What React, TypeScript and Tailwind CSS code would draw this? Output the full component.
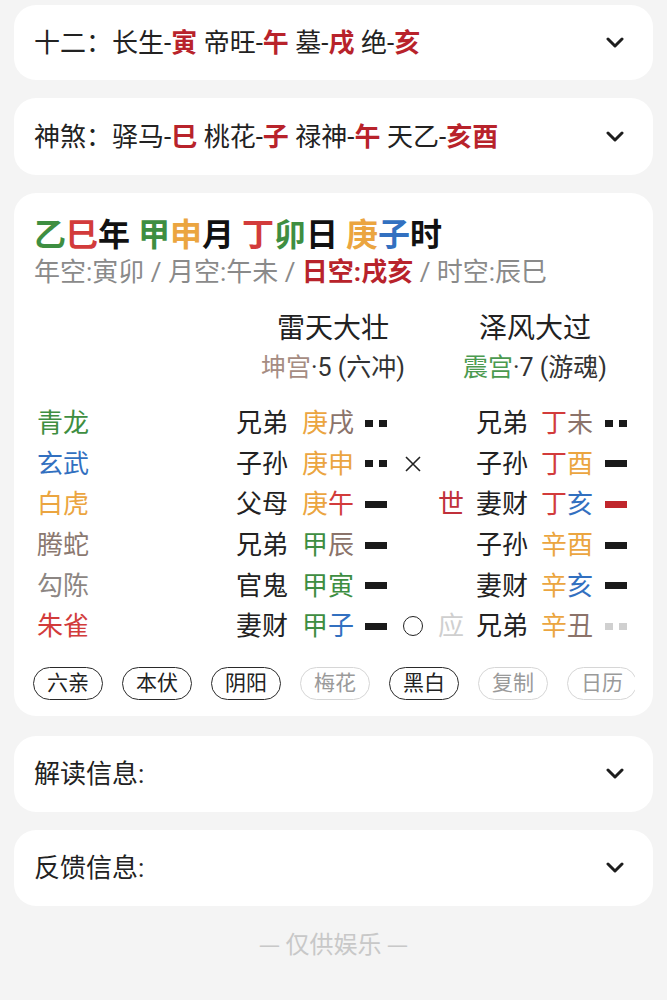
import React from "react";

const G = "text-[#3e8e41]";
const R = "text-[#d23b3b]";
const O = "text-[#eba540]";
const B = "text-[#3270c0]";
const N = "text-[#8b736a]";
const DR = "text-[#b8232b]";

function Chevron() {
  return (
    <svg width="18" height="11" viewBox="0 0 18 11" className="shrink-0">
      <polyline points="2,2 9,9 16,2" fill="none" stroke="#1e1e1e" strokeWidth="3" strokeLinecap="round" strokeLinejoin="round" />
    </svg>
  );
}

function Yang({ color = "bg-[#1a1a1a]" }: { color?: string }) {
  return <div className={`w-[22px] h-[7px] ${color}`} />;
}
function Yin({ color = "bg-[#1a1a1a]" }: { color?: string }) {
  return (
    <div className="flex gap-[6px] w-[22px]">
      <div className={`w-[8px] h-[7px] ${color}`} />
      <div className={`w-[8px] h-[7px] ${color}`} />
    </div>
  );
}

type Row = {
  shen: string;
  shenC: string;
  q1: string;
  g1: [string, string, string, string];
  l1: "yin" | "yang";
  mark?: "x" | "o";
  sy?: "世" | "应";
  q2: string;
  g2: [string, string, string, string];
  l2: "yin" | "yang";
  l2c?: string;
};

const rows: Row[] = [
  { shen: "青龙", shenC: G, q1: "兄弟", g1: ["庚", O, "戌", N], l1: "yin", q2: "兄弟", g2: ["丁", R, "未", N], l2: "yin" },
  { shen: "玄武", shenC: B, q1: "子孙", g1: ["庚", O, "申", O], l1: "yin", mark: "x", q2: "子孙", g2: ["丁", R, "酉", O], l2: "yang" },
  { shen: "白虎", shenC: O, q1: "父母", g1: ["庚", O, "午", R], l1: "yang", sy: "世", q2: "妻财", g2: ["丁", R, "亥", B], l2: "yang", l2c: "bg-[#c0262c]" },
  { shen: "腾蛇", shenC: "text-[#8a7870]", q1: "兄弟", g1: ["甲", G, "辰", N], l1: "yang", q2: "子孙", g2: ["辛", O, "酉", O], l2: "yang" },
  { shen: "勾陈", shenC: "text-[#8c8683]", q1: "官鬼", g1: ["甲", G, "寅", G], l1: "yang", q2: "妻财", g2: ["辛", O, "亥", B], l2: "yang" },
  { shen: "朱雀", shenC: R, q1: "妻财", g1: ["甲", G, "子", B], l1: "yang", mark: "o", sy: "应", q2: "兄弟", g2: ["辛", O, "丑", N], l2: "yin", l2c: "bg-[#d0d0d0]" },
];

const pills: [string, boolean][] = [
  ["六亲", true],
  ["本伏", true],
  ["阴阳", true],
  ["梅花", false],
  ["黑白", true],
  ["复制", false],
  ["日历", false],
];

export default function App() {
  return (
    <div
      className="min-h-[1000px] bg-[#f4f4f4] pt-[5px] text-[#222]"
      style={{ fontFamily: "Roboto, 'Noto Sans CJK SC', sans-serif" }}
    >
      <div className="mx-[14px] flex flex-col gap-[18px]">
        {/* 十二 */}
        <div className="h-[75px] rounded-[22px] bg-white flex items-center justify-between pl-[20px] pr-[29px]">
          <div className="text-[26px] leading-none whitespace-pre">
            十二：长生-<span className={`${DR} font-bold`}>寅</span> 帝旺-<span className={`${DR} font-bold`}>午</span> 墓-<span className={`${DR} font-bold`}>戌</span> 绝-<span className={`${DR} font-bold`}>亥</span>
          </div>
          <Chevron />
        </div>
        {/* 神煞 */}
        <div className="h-[77px] rounded-[22px] bg-white flex items-center justify-between pl-[20px] pr-[29px]">
          <div className="text-[26px] leading-none whitespace-pre">
            神煞：驿马-<span className={`${DR} font-bold`}>巳</span> 桃花-<span className={`${DR} font-bold`}>子</span> 禄神-<span className={`${DR} font-bold`}>午</span> 天乙-<span className={`${DR} font-bold`}>亥酉</span>
          </div>
          <Chevron />
        </div>

        {/* main card */}
        <div className="rounded-[22px] bg-white pl-[20px] pt-[22px] pb-[16px]">
          <div className="text-[32px] leading-[40px] font-bold whitespace-pre text-[#111]">
            <span className={G}>乙</span><span className={R}>巳</span>年 <span className={G}>甲</span><span className={O}>申</span>月 <span className={R}>丁</span><span className={G}>卯</span>日 <span className={O}>庚</span><span className={B}>子</span>时
          </div>
          <div className="mt-[1px] text-[26px] leading-[32px] text-[#8a8a8a] whitespace-pre">
            年空:寅卯 / 月空:午未 / <span className="text-[#b8232b] font-bold">日空:戌亥</span> / 时空:辰巳
          </div>

          <div className="mt-[23px] flex">
            <div className="w-[202px] shrink-0" />
            <div className="w-[194px] shrink-0 flex flex-col items-center">
              <div className="text-[28px] leading-[36px]">雷天大壮</div>
              <div className="mt-[5px] text-[25px] leading-[32px] text-[#333] whitespace-pre">
                <span className="text-[#a58c82]">坤宫</span>·5 (六冲)
              </div>
            </div>
            <div className="w-[210px] shrink-0 flex flex-col items-center">
              <div className="text-[28px] leading-[36px]">泽风大过</div>
              <div className="mt-[5px] text-[25px] leading-[32px] text-[#333] whitespace-pre">
                <span className="text-[#4b9a4f]">震宫</span>·7 (游魂)
              </div>
            </div>
          </div>

          <div className="mt-[19px] flex flex-col">
            {rows.map((r, i) => (
              <div key={i} className="flex items-center h-[40.6px] text-[26px] leading-none">
                <div className={`w-[202px] shrink-0 pl-[3px] ${r.shenC}`}>{r.shen}</div>
                <div className="w-[66px] shrink-0">{r.q1}</div>
                <div className="w-[63px] shrink-0">
                  <span className={r.g1[1]}>{r.g1[0]}</span>
                  <span className={r.g1[3]}>{r.g1[2]}</span>
                </div>
                <div className="w-[22px] shrink-0 flex items-center">
                  {r.l1 === "yin" ? <Yin /> : <Yang />}
                </div>
                <div className="w-[51px] shrink-0 flex items-center justify-center">
                  {r.mark === "x" && (
                    <svg width="18" height="18" viewBox="0 0 18 18">
                      <path d="M2 2 L16 16 M16 2 L2 16" stroke="#222" strokeWidth="1.6" fill="none" />
                    </svg>
                  )}
                  {r.mark === "o" && <div className="w-[20px] h-[20px] rounded-full border-[1.6px] border-[#222]" />}
                </div>
                <div
                  className={`w-[38px] shrink-0 ${r.sy === "世" ? "text-[#c0303a]" : "text-[#cfcfcf]"}`}
                >
                  {r.sy ?? ""}
                </div>
                <div className="w-[65px] shrink-0">{r.q2}</div>
                <div className="w-[64px] shrink-0">
                  <span className={r.g2[1]}>{r.g2[0]}</span>
                  <span className={r.g2[3]}>{r.g2[2]}</span>
                </div>
                <div className="w-[22px] shrink-0 flex items-center">
                  {r.l2 === "yin" ? <Yin color={r.l2c} /> : <Yang color={r.l2c} />}
                </div>
              </div>
            ))}
          </div>

          <div className="mt-[20px] ml-[-1px] w-[602px] overflow-hidden flex gap-[19px]">
            {pills.map(([t, on]) => (
              <div
                key={t}
                className={`shrink-0 w-[70px] h-[33px] rounded-full flex items-center justify-center text-[21px] leading-none ${
                  on ? "border-[1.5px] border-[#2a2a2a] text-[#222]" : "border-[1.5px] border-[#d6d6d6] text-[#9a9a9a]"
                }`}
              >
                {t}
              </div>
            ))}
          </div>
        </div>

        {/* 解读信息 */}
        <div className="h-[76px] rounded-[22px] bg-white flex items-center justify-between pl-[20px] pr-[29px] mt-[2px]">
          <div className="text-[26px] leading-none">解读信息:</div>
          <Chevron />
        </div>
        <div className="h-[76px] rounded-[22px] bg-white flex items-center justify-between pl-[20px] pr-[29px]">
          <div className="text-[26px] leading-none">反馈信息:</div>
          <Chevron />
        </div>
      </div>
      <div
        className="mt-[22px] text-center text-[24px] leading-[30px] text-[#c8c8c8]"
        style={{ fontFamily: "'Noto Sans CJK SC', sans-serif" }}
      >
        — 仅供娱乐 —
      </div>
    </div>
  );
}
